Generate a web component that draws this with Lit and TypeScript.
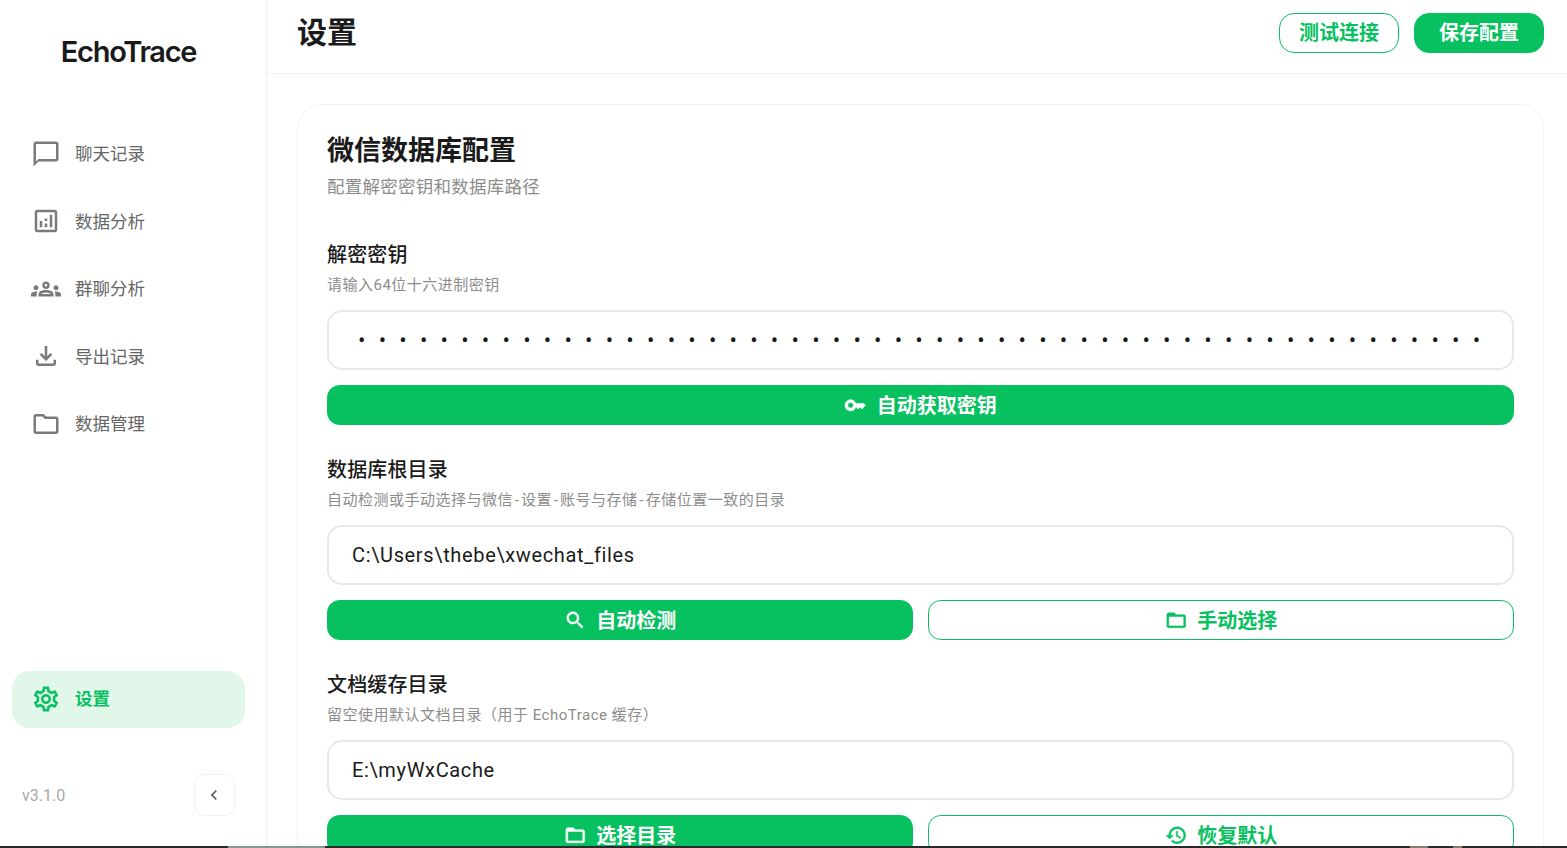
import { LitElement, html, css, svg } from "lit";
import { customElement } from "lit/decorators.js";

const P = {
  chat: "M20 2H4c-1.1 0-2 .9-2 2v18l4-4h14c1.1 0 2-.9 2-2V4c0-1.1-.9-2-2-2zm0 14H6l-2 2V4h16v12z",
  analytics: "M19 3H5c-1.1 0-2 .9-2 2v14c0 1.1.9 2 2 2h14c1.1 0 2-.9 2-2V5c0-1.1-.9-2-2-2zm0 16H5V5h14v14zM7 12h2v5H7zm8-5h2v10h-2zm-4 7h2v3h-2zm0-4h2v2h-2z",
  groups: "M4 13c1.1 0 2-.9 2-2s-.9-2-2-2-2 .9-2 2 .9 2 2 2zm1.13 1.1C4.76 14.04 4.39 14 4 14c-.99 0-1.93.21-2.78.58C.48 14.9 0 15.62 0 16.43V18h4.5v-1.61c0-.83.23-1.61.63-2.29zM20 13c1.1 0 2-.9 2-2s-.9-2-2-2-2 .9-2 2 .9 2 2 2zm4 3.43c0-.81-.48-1.53-1.22-1.85C21.93 14.21 20.99 14 20 14c-.39 0-.76.04-1.13.1.4.68.63 1.46.63 2.29V18H24v-1.57zM16.24 13.65c-1.17-.52-2.61-.9-4.24-.9-1.63 0-3.07.39-4.24.9C6.68 14.13 6 15.21 6 16.39V18h12v-1.61c0-1.18-.68-2.26-1.76-2.74zM8.07 16c.09-.23.13-.39.91-.69.97-.38 1.99-.56 3.02-.56s2.05.18 3.02.56c.77.3.81.46.91.69H8.07zM12 8c.55 0 1 .45 1 1s-.45 1-1 1-1-.45-1-1 .45-1 1-1m0-2c-1.66 0-3 1.34-3 3s1.34 3 3 3 3-1.34 3-3-1.34-3-3-3z",
  download: "M18 15v3H6v-3H4v3c0 1.1.9 2 2 2h12c1.1 0 2-.9 2-2v-3h-2zm-1-4l-1.41-1.41L13 12.17V4h-2v8.17L8.41 9.59 7 11l5 5 5-5z",
  folder: "M9.17 6l2 2H20v10H4V6h5.17M10 4H4c-1.1 0-1.99.9-1.99 2L2 18c0 1.1.9 2 2 2h16c1.1 0 2-.9 2-2V8c0-1.1-.9-2-2-2h-8l-2-2z",
  folderOpen: "M20 6h-8l-2-2H4c-1.1 0-1.99.9-1.99 2L2 18c0 1.1.9 2 2 2h16c1.1 0 2-.9 2-2V8c0-1.1-.9-2-2-2zm0 12H4V8h16v10z",
  settings: "M19.43 12.98c.04-.32.07-.64.07-.98 0-.34-.03-.66-.07-.98l2.11-1.65c.19-.15.24-.42.12-.64l-2-3.46c-.09-.16-.26-.25-.44-.25-.06 0-.12.01-.17.03l-2.49 1c-.52-.4-1.08-.73-1.69-.98l-.38-2.65C14.46 2.18 14.25 2 14 2h-4c-.25 0-.46.18-.49.42l-.38 2.65c-.61.25-1.17.59-1.69.98l-2.49-1c-.06-.02-.12-.03-.18-.03-.17 0-.34.09-.43.25l-2 3.46c-.13.22-.07.49.12.64l2.11 1.65c-.04.32-.07.65-.07.98 0 .33.03.66.07.98l-2.11 1.65c-.19.15-.24.42-.12.64l2 3.46c.09.16.26.25.44.25.06 0 .12-.01.17-.03l2.49-1c.52.4 1.08.73 1.69.98l.38 2.65c.03.24.24.42.49.42h4c.25 0 .46-.18.49-.42l.38-2.65c.61-.25 1.17-.59 1.69-.98l2.49 1c.06.02.12.03.18.03.17 0 .34-.09.43-.25l2-3.46c.12-.22.07-.49-.12-.64l-2.11-1.65zm-1.98-1.71c.04.31.05.52.05.73 0 .21-.02.43-.05.73l-.14 1.13.89.7 1.08.84-.7 1.21-1.27-.51-1.04-.42-.9.68c-.43.32-.84.56-1.25.73l-1.06.43-.16 1.13-.2 1.35h-1.4l-.19-1.35-.16-1.13-1.06-.43c-.43-.18-.83-.41-1.23-.71l-.91-.7-1.06.43-1.27.51-.7-1.21 1.08-.84.89-.7-.14-1.13c-.03-.31-.05-.54-.05-.74s.02-.43.05-.73l.14-1.13-.89-.7-1.08-.84.7-1.21 1.27.51 1.04.42.9-.68c.43-.32.84-.56 1.25-.73l1.06-.43.16-1.13.2-1.35h1.39l.19 1.35.16 1.13 1.06.43c.43.18.83.41 1.23.71l.91.7 1.06-.43 1.27-.51.7 1.21-1.07.85-.89.7.14 1.13zM12 8c-2.21 0-4 1.79-4 4s1.79 4 4 4 4-1.79 4-4-1.79-4-4-4zm0 6c-1.1 0-2-.9-2-2s.9-2 2-2 2 .9 2 2-.9 2-2 2z",
  search: "M15.5 14h-.79l-.28-.27C15.41 12.59 16 11.11 16 9.5 16 5.91 13.09 3 9.5 3S3 5.91 3 9.5 5.91 16 9.5 16c1.61 0 3.09-.59 4.23-1.57l.27.28v.79l5 4.99L20.49 19l-4.99-5zm-6 0C7.01 14 5 11.99 5 9.5S7.01 5 9.5 5 14 7.01 14 9.5 11.99 14 9.5 14z",
  key: "M21 10h-8.35C11.83 7.67 9.61 6 7 6c-3.31 0-6 2.69-6 6s2.69 6 6 6c2.61 0 4.83-1.67 5.65-4H13l2 2 2-2 2 2 4-4.04L21 10zM7 15c-1.65 0-3-1.35-3-3s1.35-3 3-3 3 1.35 3 3-1.35 3-3 3z",
  restore: "M13 3c-4.97 0-9 4.03-9 9H1l3.89 3.89.07.14L9 12H6c0-3.87 3.13-7 7-7s7 3.13 7 7-3.13 7-7 7c-1.93 0-3.68-.79-4.94-2.06l-1.42 1.42C8.27 19.99 10.51 21 13 21c4.97 0 9-4.03 9-9s-4.03-9-9-9zm-1 5v5l4.28 2.54.72-1.21-3.5-2.08V8H12z",
  chevron: "M15.41 7.41L14 6l-6 6 6 6 1.41-1.41L10.83 12z",
};
const icon = (d: string, cls = "") => html`<svg class=${cls} viewBox="0 0 24 24" fill="currentColor">${svg`<path d=${d}></path>`}</svg>`;

const NAV = [
  ["聊天记录", P.chat],
  ["数据分析", P.analytics],
  ["群聊分析", P.groups],
  ["导出记录", P.download],
  ["数据管理", P.folder],
];

@customElement("app-root")
export class AppRoot extends LitElement {
  static styles = css`
    :host {
      display: block;
      width: 1567px;
      height: 848px;
      overflow: hidden;
      position: relative;
      background: #fff;
      color: #1a1a1a;
      font-family: "Roboto", "Noto Sans CJK SC", "Noto Sans", sans-serif;
    }
    .app { display: flex; height: 848px; }
    .side {
      width: 266px;
      flex: none;
      border-right: 1px solid #f2f2f2;
      display: flex;
      flex-direction: column;
      padding-bottom: 32px;
      height: 816px;
    }
    .logo {
      height: 103px;
      box-sizing: border-box;
      padding-right: 9px;
      display: flex;
      align-items: center;
      justify-content: center;
      font-family: "Inter", sans-serif;
      font-size: 29px;
      font-weight: 600;
      letter-spacing: -1.3px;
      color: #1a1a1a;
    }
    nav { display: flex; flex-direction: column; gap: 10px; padding: 22px 21px 0 12px; flex: 1; }
    .item {
      height: 57.5px;
      display: flex;
      align-items: center;
      gap: 14px;
      padding: 0 19px;
      border-radius: 17.5px;
      font-size: 17.5px;
      color: #666;
    }
    .item span { padding-bottom: 2px; }
    .item svg { width: 30px; height: 30px; color: #7a7a7a; flex: none; }
    .item.active { background: #e1f7ea; color: #07c160; font-weight: 600; }
    .item.active svg { color: #07c160; }
    .item.active span { padding-bottom: 4px; }
    .grow { flex: 1; }
    .foot {
      display: flex;
      align-items: center;
      justify-content: space-between;
      padding: 46px 31px 0 22px;
      color: #a8a8a8;
      font-size: 16px;
    }
    .collapse {
      width: 41.5px;
      height: 42px;
      box-sizing: border-box;
      border: 1px solid #f2f2f2;
      border-radius: 10px;
      display: flex;
      align-items: center;
      justify-content: center;
      color: #5f5f5f;
    }
    .collapse svg { width: 20px; height: 20px; }
    .main { flex: 1; min-width: 0; display: flex; flex-direction: column; }
    header {
      height: 60px;
      flex: none;
      border-bottom: 1px solid #f2f2f2;
      display: flex;
      align-items: flex-start;
      justify-content: space-between;
      padding: 13px 23px 0 30px;
    }
    h1 { margin: 0; font-size: 30px; line-height: 40px; font-weight: 600; }
    .actions { display: flex; gap: 15px; }
    .btn {
      height: 40px;
      box-sizing: border-box;
      display: flex;
      align-items: center;
      justify-content: center;
      gap: 10px;
      border-radius: 12.5px;
      font-size: 20px;
      font-weight: 600;
      background: #07c160;
      color: #fff;
      border: 1px solid #07c160;
    }
    .btn span { padding-bottom: 2px; }
    .btn svg { width: 22.5px; height: 22.5px; stroke: currentColor; stroke-width: .5px; }
    .btn.out { background: #fff; color: #07c160; }
    .actions .btn { padding: 0 24px 4px; border-radius: 15px; }
    .actions .btn.out { padding: 0 19px 4px; }
    .content { padding: 30px 23px 0 30px; }
    .card {
      border: 1px solid #f2f2f2;
      border-radius: 25px;
      padding: 29px 29px 40px;
    }
    h2 { margin: 0; font-size: 27px; line-height: 34px; font-weight: 600; }
    .sub { margin: 7px 0 0; font-size: 17.5px; line-height: 24px; color: #8c8c8c; letter-spacing: .25px; }
    .field { margin-top: 30px; }
    .first { margin-top: 41px; }
    label { display: block; font-size: 20px; line-height: 30px; font-weight: 500; letter-spacing: .15px; }
    .hint { font-size: 15px; line-height: 22px; color: #8c8c8c; margin-top: 4px; letter-spacing: .5px; }
    .hy { padding: 0 1.7px; }
    input {
      display: block;
      width: 100%;
      height: 60px;
      margin-top: 14px;
      box-sizing: border-box;
      border: 2px solid #e8e8e8;
      border-radius: 15px;
      padding: 0 23px;
      outline: none;
      font: 20px "Roboto", "Noto Sans", sans-serif;
      letter-spacing: .65px;
      color: #1a1a1a;
      background: #fff;
    }
    input[type="password"] { font-size: 22px; letter-spacing: 13.22px; padding: 0 23px 0 29px; }
    .row { display: flex; gap: 15px; margin-top: 15px; }
    .row .btn { flex: 1; }
    .strip {
      position: absolute;
      left: 0;
      right: 0;
      bottom: 0;
      height: 2px;
      background: linear-gradient(90deg, #2a2a2a 0 228px, #8a968c 228px 325px, #2a2a2a 325px 1410px, #8d7a6a 1410px 1428px, #2a2a2a 1428px 1453px, #8d7a6a 1453px 1462px, #2a2a2a 1462px);
    }
  `;

  render() {
    const key = "a".repeat(64);
    const hy = html`<span class="hy">-</span>`;
    return html`
      <div class="app">
        <aside class="side">
          <div class="logo">EchoTrace</div>
          <nav>
            ${NAV.map(([t, d]) => html`<div class="item">${icon(d)}<span>${t}</span></div>`)}
            <div class="grow"></div>
            <div class="item active">${icon(P.settings)}<span>设置</span></div>
          </nav>
          <div class="foot">
            <span>v3.1.0</span>
            <div class="collapse">${icon(P.chevron)}</div>
          </div>
        </aside>
        <div class="main">
          <header>
            <h1>设置</h1>
            <div class="actions">
              <div class="btn out">测试连接</div>
              <div class="btn">保存配置</div>
            </div>
          </header>
          <div class="content">
            <section class="card">
              <h2>微信数据库配置</h2>
              <p class="sub">配置解密密钥和数据库路径</p>
              <div class="field first">
                <label>解密密钥</label>
                <div class="hint">请输入64位十六进制密钥</div>
                <input type="password" .value=${key} />
                <div class="row"><div class="btn">${icon(P.key)}<span>自动获取密钥</span></div></div>
              </div>
              <div class="field">
                <label>数据库根目录</label>
                <div class="hint">自动检测或手动选择与微信${hy}设置${hy}账号与存储${hy}存储位置一致的目录</div>
                <input type="text" .value=${"C:\\Users\\thebe\\xwechat_files"} />
                <div class="row">
                  <div class="btn">${icon(P.search)}<span>自动检测</span></div>
                  <div class="btn out">${icon(P.folderOpen)}<span>手动选择</span></div>
                </div>
              </div>
              <div class="field">
                <label>文档缓存目录</label>
                <div class="hint">留空使用默认文档目录（用于 EchoTrace 缓存）</div>
                <input type="text" .value=${"E:\\myWxCache"} />
                <div class="row">
                  <div class="btn">${icon(P.folderOpen)}<span>选择目录</span></div>
                  <div class="btn out">${icon(P.restore)}<span>恢复默认</span></div>
                </div>
              </div>
            </section>
          </div>
        </div>
      </div>
      <div class="strip"></div>
    `;
  }
}
